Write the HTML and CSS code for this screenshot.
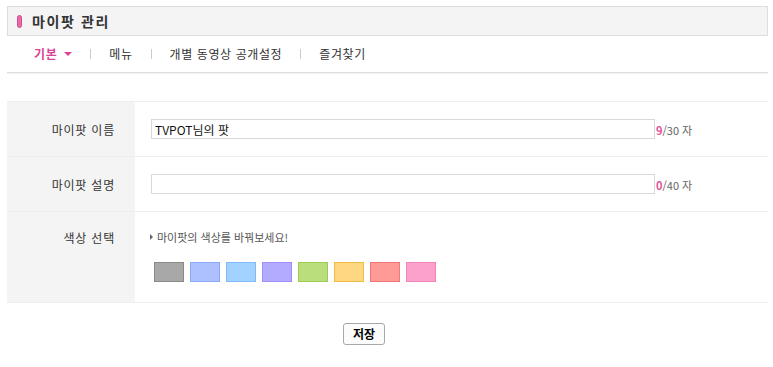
FILE: index.html
```html
<!DOCTYPE html>
<html lang="ko">
<head>
<meta charset="utf-8">
<link rel="stylesheet" href="styles.css">
</head>
<body>
<div class="page">
  <div class="title-bar">
    <span class="pill"></span>
    <h1 class="title">마이팟 관리</h1>
  </div>
  <nav class="tabs">
    <span class="tab active">기본 <span class="caret"></span></span>
    <span class="sep"></span>
    <span class="tab">메뉴</span>
    <span class="sep"></span>
    <span class="tab">개별 동영상 공개설정</span>
    <span class="sep"></span>
    <span class="tab">즐겨찾기</span>
  </nav>
  <div class="form">
    <div class="row">
      <div class="label">마이팟 이름</div>
      <div class="field">
        <input class="text-input" type="text" value="TVPOT님의 팟">
        <span class="count"><b>9</b>/30 자</span>
      </div>
    </div>
    <div class="row">
      <div class="label">마이팟 설명</div>
      <div class="field">
        <input class="text-input" type="text" value="">
        <span class="count"><b>0</b>/40 자</span>
      </div>
    </div>
    <div class="row row-color">
      <div class="label label-top">색상 선택</div>
      <div class="field field-color">
        <p class="hint"><span class="arrow"></span>마이팟의 색상를 바꿔보세요!</p>
        <div class="swatches">
          <span class="sw sw-gray"></span>
          <span class="sw sw-blue"></span>
          <span class="sw sw-sky"></span>
          <span class="sw sw-purple"></span>
          <span class="sw sw-green"></span>
          <span class="sw sw-yellow"></span>
          <span class="sw sw-red"></span>
          <span class="sw sw-pink"></span>
        </div>
      </div>
    </div>
  </div>
  <div class="actions">
    <button class="save" type="button">저장</button>
  </div>
</div>
</body>
</html>
```

FILE: styles.css
```css
* { box-sizing: border-box; }
body {
  margin: 0;
  background: #fff;
  font-family: "Noto Sans CJK KR", "Noto Sans", sans-serif;
  font-size: 12px;
  color: #333;
}
.page {
  width: 761px;
  margin-left: 7px;
  padding-top: 6px;
}
.title-bar {
  height: 30px;
  background: #f4f4f4;
  border: 1px solid #dddddd;
  display: flex;
  align-items: center;
  padding-left: 9px;
}
.pill {
  width: 5px;
  height: 13px;
  border-radius: 3px;
  background: #e86aa8;
  border: 1px solid #c94f8c;
}
.title {
  margin: 0 0 0 10px;
  font-size: 14px;
  font-weight: bold;
  color: #333;
  line-height: 1;
  letter-spacing: 1.6px;
}
.tabs {
  height: 37px;
  display: flex;
  align-items: center;
  padding-left: 27px;
  border-bottom: 1px solid #dddddd;
  box-shadow: 0 1px 0 #f2f2f2;
}
.tab {
  color: #333;
  font-size: 12px;
  line-height: 1;
  display: flex;
  align-items: center;
  letter-spacing: 0.6px;
}
.tab.active {
  color: #d94594;
  font-weight: bold;
}
.caret {
  display: inline-block;
  margin-left: 7px;
  width: 0;
  height: 0;
  border-left: 4px solid transparent;
  border-right: 4px solid transparent;
  border-top: 4px solid #d94594;
}
.sep {
  width: 1px;
  height: 10px;
  background: #cccccc;
  margin: 0 18px 0 18px;
}
.form {
  margin-top: 28px;
  border-top: 1px solid #eeeeee;
}
.row {
  display: grid;
  grid-template-columns: 128px 1fr;
  border-bottom: 1px solid #eeeeee;
  min-height: 55px;
}
.row-color { min-height: 91px; }
.label {
  background: #f4f4f4;
  text-align: right;
  padding-right: 20px;
  display: flex;
  align-items: center;
  justify-content: flex-end;
  color: #333;
  letter-spacing: 0.8px;
}
.label-top {
  align-items: flex-start;
  padding-top: 17px;
}
.field {
  display: flex;
  align-items: center;
  padding-left: 16px;
}
.text-input {
  width: 504px;
  height: 20px;
  border: 1px solid #d9d9d9;
  padding: 0 3px;
  font-family: "Noto Sans CJK KR", "Noto Sans", sans-serif;
  font-size: 12px;
  color: #111;
  outline: none;
}
.count {
  color: #666;
  font-size: 11px;
  margin-left: 1px;
  padding-top: 2px;
}
.count b { color: #e2529c; }
.field-color {
  flex-direction: column;
  align-items: flex-start;
  padding-left: 15px;
}
.hint {
  margin: 18px 0 0 0;
  font-size: 11px;
  color: #555;
  display: flex;
  align-items: center;
  line-height: 14px;
}
.arrow {
  width: 0;
  height: 0;
  border-top: 3px solid transparent;
  border-bottom: 3px solid transparent;
  border-left: 3px solid #666;
  margin-right: 4px;
}
.swatches {
  display: flex;
  gap: 6px;
  margin-top: 18px;
  margin-left: 4px;
}
.sw {
  width: 30px;
  height: 20px;
  border: 1px solid;
}
.sw-gray { background: #a8a8a8; border-color: #8a8a8a; }
.sw-blue { background: #adc0ff; border-color: #8ea8f8; }
.sw-sky { background: #a2d2ff; border-color: #82baf6; }
.sw-purple { background: #b3abff; border-color: #9d8ff5; }
.sw-green { background: #bade7c; border-color: #9ccc50; }
.sw-yellow { background: #ffd781; border-color: #eebd42; }
.sw-red { background: #ff9a96; border-color: #f27777; }
.sw-pink { background: #fca0cc; border-color: #f283b6; }
.actions {
  display: flex;
  padding-left: 336px;
  padding-top: 20px;
}
.save {
  width: 42px;
  height: 22px;
  border: 1px solid #a8a8a8;
  border-radius: 3px;
  background: #fbfbfb;
  font-family: "Noto Sans CJK KR", "Noto Sans", sans-serif;
  font-size: 12px;
  font-weight: bold;
  color: #000;
  padding: 0;
  line-height: 1;
}
```
